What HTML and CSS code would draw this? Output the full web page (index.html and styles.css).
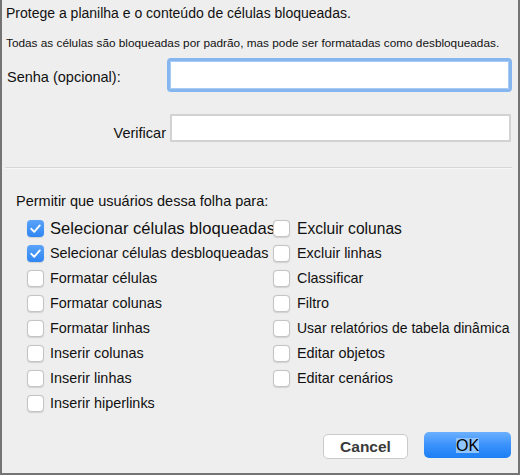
FILE: index.html
```html
<!DOCTYPE html>
<html lang="pt">
<head>
  <meta charset="UTF-8">
  <title>Proteger planilha</title>
  <link rel="stylesheet" href="styles.css">
</head>
<body>

  <div class="dialog">
    <p class="title">Protege a planilha e o conteúdo de células bloqueadas.</p>
    <p class="hint">Todas as células são bloqueadas por padrão, mas pode ser formatadas como desbloqueadas.</p>

    <div class="field">
      <label class="field-label" for="pwd">Senha (opcional):</label>
      <input class="pwd focused" id="pwd" type="password">
    </div>

    <div class="field field-verify">
      <label class="field-label right" for="pwd2">Verificar</label>
      <input class="pwd" id="pwd2" type="password">
    </div>

    <div class="sep"></div>

    <p class="allow">Permitir que usuários dessa folha para:</p>

    <div class="options">
      <div class="col col-left">
        <label class="opt big"><span class="box checked"><svg viewBox="0 0 17 17" width="17" height="17"><path d="M4.3 8.8 L7.2 11.8 L12.8 5.4" fill="none" stroke="#fff" stroke-width="1.9" stroke-linecap="round" stroke-linejoin="round"/></svg></span>Selecionar células bloqueadas</label>
        <label class="opt"><span class="box checked"><svg viewBox="0 0 17 17" width="17" height="17"><path d="M4.3 8.8 L7.2 11.8 L12.8 5.4" fill="none" stroke="#fff" stroke-width="1.9" stroke-linecap="round" stroke-linejoin="round"/></svg></span>Selecionar células desbloqueadas</label>
        <label class="opt"><span class="box"></span>Formatar células</label>
        <label class="opt"><span class="box"></span>Formatar colunas</label>
        <label class="opt"><span class="box"></span>Formatar linhas</label>
        <label class="opt"><span class="box"></span>Inserir colunas</label>
        <label class="opt"><span class="box"></span>Inserir linhas</label>
        <label class="opt"><span class="box"></span>Inserir hiperlinks</label>
      </div>
      <div class="col col-right">
        <label class="opt mid"><span class="box"></span>Excluir colunas</label>
        <label class="opt"><span class="box"></span>Excluir linhas</label>
        <label class="opt"><span class="box"></span>Classificar</label>
        <label class="opt"><span class="box"></span>Filtro</label>
        <label class="opt narrow"><span class="box"></span>Usar relatórios de tabela dinâmica</label>
        <label class="opt"><span class="box"></span>Editar objetos</label>
        <label class="opt"><span class="box"></span>Editar cenários</label>
      </div>
    </div>

    <div class="buttons">
      <button class="btn cancel">Cancel</button>
      <button class="btn ok"><span class="sel">OK</span></button>
    </div>
  </div>

</body>
</html>
```

FILE: styles.css
```css
body {
  margin: 0;
  font-family: "Liberation Sans", Arial, sans-serif;
  color: #111;
}
.dialog {
  width: 520px;
  height: 475px;
  box-sizing: border-box;
  background: #eeeeee;
  border-left: 2px solid #747474;
  border-right: 2px solid #747474;
  border-bottom: 2px solid #747474;
}
p {
  margin: 0;
}
.title {
  font-size: 14px;
  line-height: 16px;
  padding: 5px 0 0 4px;
}
.hint {
  font-size: 11.8px;
  line-height: 13px;
  margin-top: 16px;
  padding-left: 4px;
  color: #111;
}
.field {
  display: flex;
  align-items: flex-start;
  margin-top: 8px;
}
.field-label {
  width: 160px;
  padding-left: 5px;
  margin-top: 11px;
  font-size: 14.5px;
  line-height: 17px;
}
.field-label.right {
  width: 159px;
  padding: 0 4px 0 5px;
  text-align: right;
}
.pwd {
  display: block;
  box-sizing: border-box;
  margin: 0;
  background: #fff;
  outline: none;
}
.pwd.focused {
  width: 345px;
  height: 34px;
  border: 3px solid #86b6ef;
  border-radius: 4px;
  box-shadow: inset 0 0 0 1px #a9cbf3;
}
.field-verify {
  margin-top: 22px;
}
.field-verify .pwd {
  width: 341px;
  height: 28px;
  border: 2px solid #d2d2d2;
  border-radius: 1px;
}
.sep {
  margin: 25px 6px 0 3px;
  border-top: 1px solid #d6d6d6;
  border-bottom: 1px solid #f6f6f6;
}
.allow {
  font-size: 14.5px;
  line-height: 17px;
  margin-top: 24px;
  padding-left: 14px;
}
.options {
  display: flex;
  margin-top: 6px;
  padding-left: 25px;
}
.col {
  display: flex;
  flex-direction: column;
}
.col-left {
  width: 246px;
}
.opt {
  display: flex;
  align-items: center;
  height: 25px;
  font-size: 14.4px;
  line-height: 17px;
  white-space: nowrap;
}
.opt.big {
  font-size: 16.6px;
}
.opt.mid {
  font-size: 15.6px;
}
.opt.narrow {
  font-size: 14px;
}
.box {
  flex: none;
  width: 17px;
  height: 17px;
  box-sizing: border-box;
  margin-right: 6px;
  background: #fff;
  border: 1px solid #c4c4c4;
  border-radius: 4px;
  box-shadow: 0 0.5px 1px rgba(0, 0, 0, 0.12);
}
.col-right .box {
  margin-right: 7px;
}
.box.checked {
  border: none;
  background: linear-gradient(#5aa3fa, #2f86f2);
}
.box svg {
  display: block;
}
.buttons {
  display: flex;
  justify-content: flex-end;
  align-items: flex-start;
  gap: 16px;
  margin-top: 16px;
  padding-right: 7px;
}
.btn {
  box-sizing: border-box;
  margin: 0;
  font-family: "Liberation Sans", Arial, sans-serif;
  border-radius: 5px;
}
.cancel {
  width: 85px;
  height: 25px;
  margin-top: 2px;
  background: #fff;
  border: 1px solid #cacaca;
  color: #3a3a3a;
  font-size: 15.5px;
  font-weight: bold;
}
.ok {
  width: 87px;
  height: 26px;
  padding-top: 3px;
  border: none;
  background: linear-gradient(#6cb0ff, #3a92fb 50%, #1c7ff5);
  color: #000;
  font-size: 16px;
}
.sel {
  background: #8fc4ff;
  line-height: 15px;
  display: inline-block;
}
```
